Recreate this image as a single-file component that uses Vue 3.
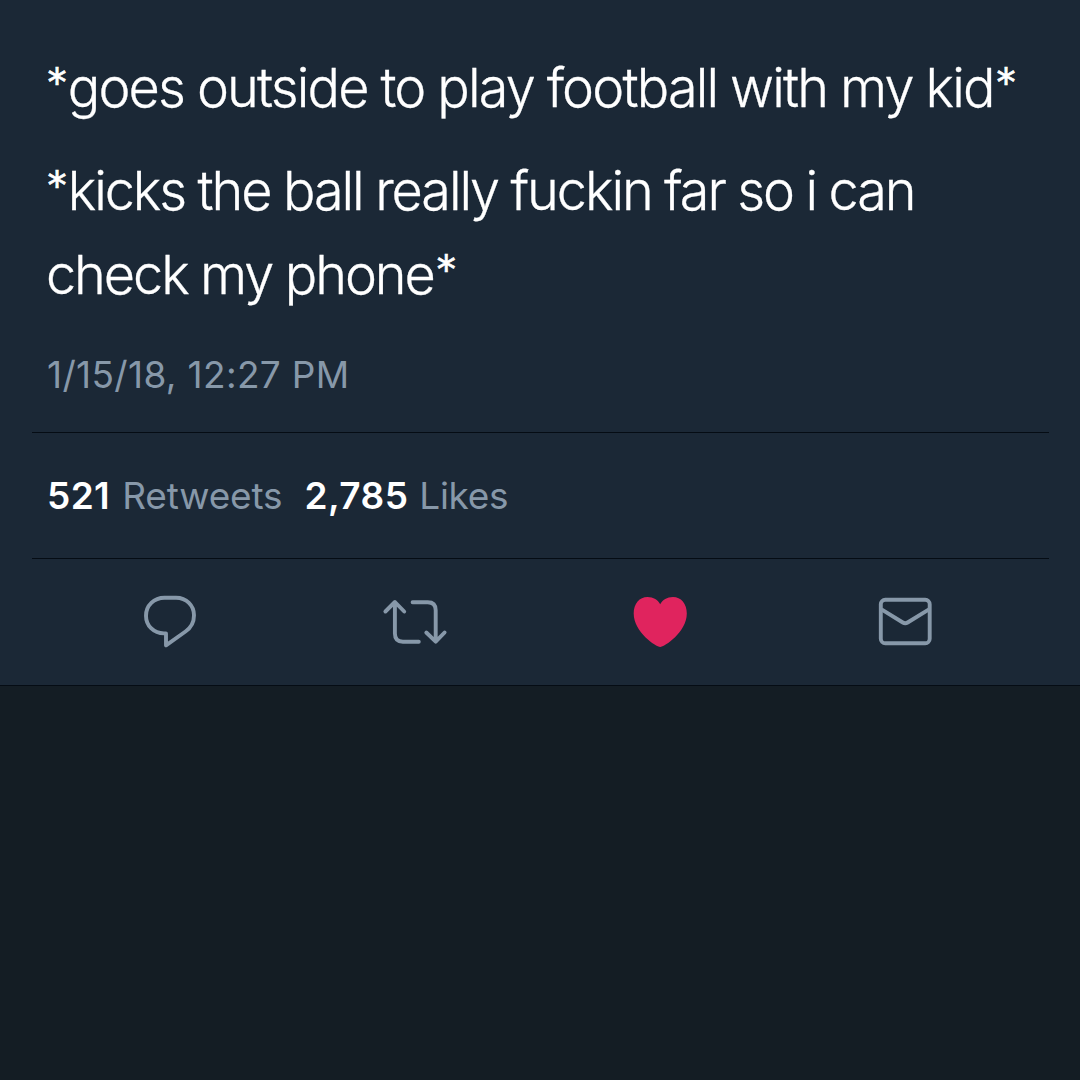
<template>
  <main class="tweet-page">
    <article class="tweet-detail">
      <div class="tweet-body">
        <p class="tweet-text"><span class="star">*</span>{{ tweet.setup }}<span class="star end">*</span></p>
        <p class="tweet-text second"><span class="star">*</span>{{ tweet.action }}<br />{{ tweet.ending }}<span class="star end">*</span></p>
        <time class="tweet-time">{{ tweet.time }}</time>
      </div>

      <div class="tweet-stats">
        <span v-for="stat in stats" :key="stat.label" class="stat" :class="stat.name">
          <strong class="stat-count">{{ stat.count }}</strong>
          <span class="stat-label">{{ stat.label }}</span>
        </span>
      </div>

      <div class="tweet-actions">
        <button class="action-btn" aria-label="Reply">
          <svg width="80" height="80" viewBox="0 0 80 80" fill="none">
            <path d="M34.5 17.8H46C56.5 17.8 64 25.5 64 35.3C64 42.6 61.2 47.6 55.5 51.5L36 65.3V53.4H34C23.5 53.4 16 45.5 16 35.7C16 25.5 24 17.8 34.5 17.8Z" stroke="currentColor" stroke-width="3.9" stroke-linejoin="round"/>
          </svg>
        </button>
        <button class="action-btn" aria-label="Retweet">
          <svg width="90" height="80" viewBox="0 0 90 80" fill="none">
            <path d="M15.4 31.5L24.9 22L34.2 31.5M24.9 23V53.5Q24.9 61.7 32.9 61.7H48.8M42.6 22.3H57.7Q65.7 22.3 65.7 30.3V61M56.3 52.5L65.7 61.7L74.6 52.5" stroke="currentColor" stroke-width="3.9" stroke-linecap="round" stroke-linejoin="round"/>
          </svg>
        </button>
        <button class="action-btn liked" aria-label="Like">
          <svg width="80" height="80" viewBox="0 0 80 80" fill="none">
            <path d="M40.2 67C36 67 13.7 52 13.7 33.5C13.7 23.5 19.5 17 27.5 17C33.5 17 38 20 40.2 24.3C42.5 20 47 17 53 17C61 17 66.8 23.5 66.8 33.5C66.8 52 44.4 67 40.2 67Z" fill="currentColor"/>
          </svg>
        </button>
        <button class="action-btn" aria-label="Direct message">
          <svg width="80" height="80" viewBox="0 0 80 80" fill="none">
            <rect x="15.8" y="19.7" width="48.9" height="43.6" rx="4.5" stroke="currentColor" stroke-width="3.9"/>
            <path d="M16.5 29.3L37.8 42.5Q40.2 44 42.6 42.5L64 29.3" stroke="currentColor" stroke-width="3.9"/>
          </svg>
        </button>
      </div>
    </article>
  </main>
</template>

<script setup>
import { ref } from 'vue'

const tweet = ref({
  setup: 'goes outside to play football with my kid',
  action: 'kicks the ball really fuckin far so i can',
  ending: 'check my phone',
  time: '1/15/18, 12:27 PM'
})

const stats = ref([
  { name: 'retweets', count: '521', label: 'Retweets' },
  { name: 'likes', count: '2,785', label: 'Likes' }
])
</script>

<style>
body {
  margin: 0;
  background: #141d24;
}
</style>

<style scoped>
.tweet-page {
  min-height: 100vh;
  background: #141d24;
  font-family: Inter, "Liberation Sans", sans-serif;
}

.tweet-detail {
  box-sizing: border-box;
  height: 686px;
  padding: 46px 31px 0 32px;
  background: #1b2836;
  border-bottom: 1px solid #050c14;
}

.tweet-body {
  box-sizing: border-box;
  height: 386px;
  padding-left: 15px;
}

.tweet-text {
  margin: 0 0 0 -1px;
  font-size: 54px;
  font-weight: 300;
  line-height: 84px;
  letter-spacing: -1.83px;
  word-spacing: -0.6px;
  white-space: nowrap;
  color: #ffffff;
  -webkit-text-stroke: 0.3px #ffffff;
}

.tweet-text.second {
  margin-top: 19px;
  letter-spacing: -2.08px;
}

/* small raised asterisks around the actions */
.star {
  font-size: 44px;
  line-height: 0;
  vertical-align: 8px;
  letter-spacing: -0.3px;
  -webkit-text-stroke-width: 0.7px;
}

.star.end {
  margin-left: 1.5px;
}

.tweet-time {
  display: block;
  margin-top: 34px;
  font-size: 37px;
  line-height: 48px;
  letter-spacing: 0.35px;
  color: #8798a9;
}

.tweet-stats {
  box-sizing: border-box;
  height: 126px;
  padding-left: 15px;
  display: flex;
  align-items: center;
  gap: 22px;
  border-top: 1px solid #050c14;
  font-size: 37px;
  line-height: 48px;
}

.stat {
  display: flex;
  gap: 12px;
}

.stat-count {
  font-weight: 600;
  letter-spacing: 0.4px;
  color: #ffffff;
}

.stat-label {
  letter-spacing: -0.15px;
  color: #8798a9;
}

.likes .stat-label {
  margin-left: -1px;
  letter-spacing: -0.3px;
}

.tweet-actions {
  height: 122px;
  padding: 0 15px;
  display: grid;
  grid-template-columns: repeat(4, 245px);
  border-top: 1px solid #050c14;
}

.action-btn {
  display: flex;
  align-items: center;
  justify-content: center;
  padding: 0;
  border: none;
  background: transparent;
  color: #8798a9;
  cursor: pointer;
}

.action-btn.liked {
  color: #e0245e;
}
</style>
